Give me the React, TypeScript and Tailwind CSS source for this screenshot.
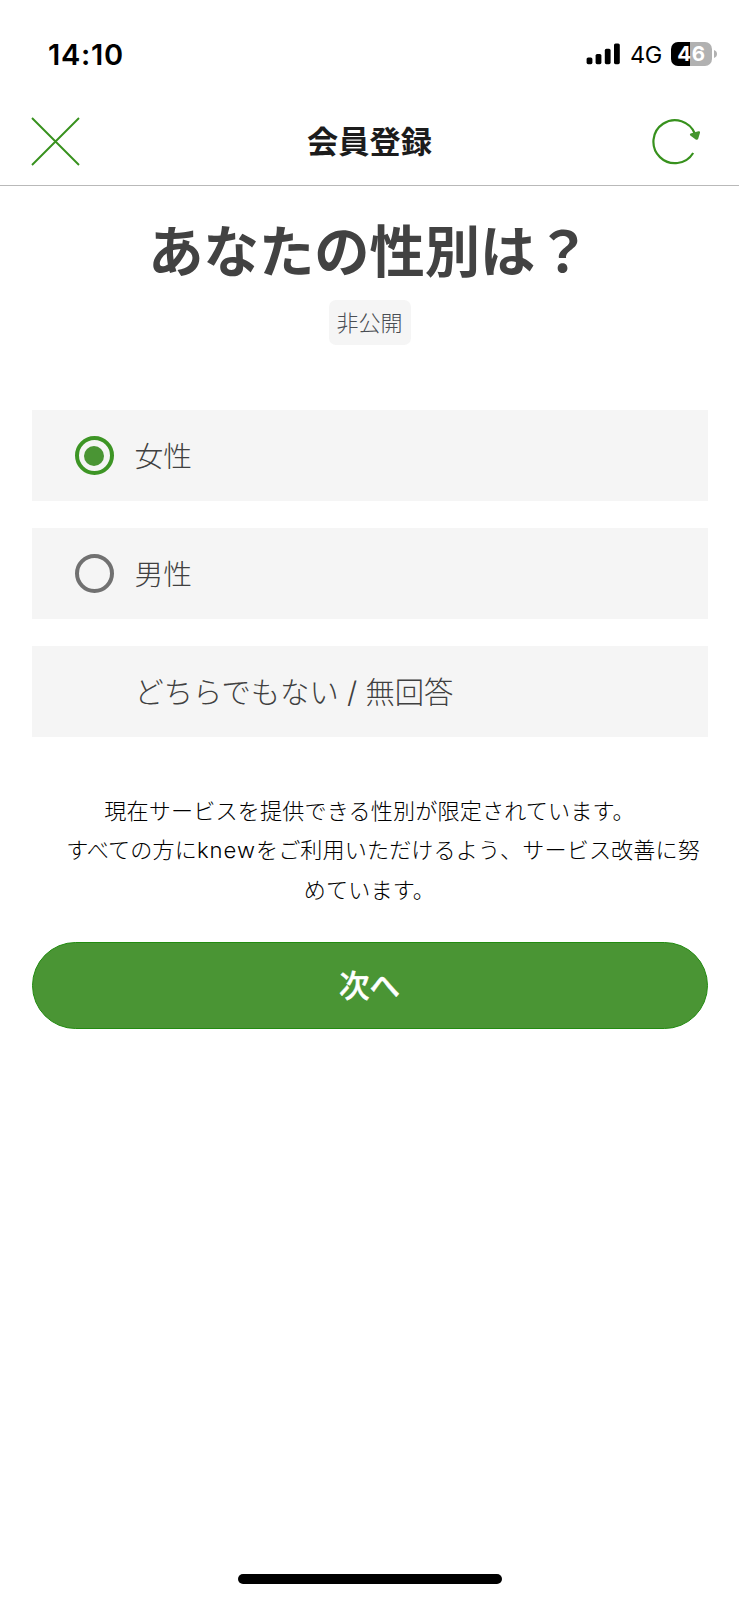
const jp = "font-['Inter','Noto_Sans_CJK_JP',sans-serif]";

function StatusBar() {
  return (
    <div className="flex h-[108px] items-center justify-between pl-[48px] pr-[22px]">
      <span className="font-['Inter',sans-serif] text-[29px] font-semibold leading-none tracking-[0.7px] text-black">14:10</span>
      <div className="flex items-center">
        <svg className="mr-[10px]" width="34" height="22" viewBox="0 0 34 22" fill="#000">
          <rect x="0.6" y="14.5" width="5.8" height="6.7" rx="1.6" />
          <rect x="9.6" y="11" width="5.8" height="10.2" rx="1.6" />
          <rect x="18.8" y="5.8" width="5.8" height="15.4" rx="1.6" />
          <rect x="28" y="0.5" width="5.8" height="20.7" rx="1.6" />
        </svg>
        <span className="w-[41px] pt-[2px] font-['Inter',sans-serif] text-[23.5px] leading-none tracking-[-0.5px] text-black">4G</span>
        <div className="flex h-6 w-[41px] items-center justify-center rounded-[7px] bg-linear-to-r from-black from-46% to-[#b1b1b1] to-46% font-['Inter',sans-serif] text-[20.5px] font-bold leading-6 tracking-[0.7px] text-white">
          46
        </div>
        <svg className="ml-[2px]" width="3" height="8" viewBox="0 0 3 8" fill="#b1b1b1">
          <path d="M0 0Q3 1.2 3 4T0 8Z" />
        </svg>
      </div>
    </div>
  );
}

function Header() {
  return (
    <header className="flex h-[78px] items-center justify-between border-b border-[#b9b9b9] px-[31px] pb-[10px]">
      <svg width="56" height="49" viewBox="0 0 56 49" fill="none" stroke="#37911d" strokeWidth="1.9">
        <path d="M1 1L48 48M48 1L1 48" />
      </svg>
      <h2 className="pt-[2px] text-[31.2px] font-bold leading-none text-[#1c1c1c]">会員登録</h2>
      <svg width="56" height="49" viewBox="0 0 56 49" fill="none">
        <path d="M41.2 36A21.5 21.5 0 1 1 43 17" stroke="#37911d" strokeWidth="2.2" />
        <path d="M38.3 18.4Q37.2 17.1 38.6 16.4L46.4 14.2Q48.6 13.8 48 15.7L46.2 21.7Q45.4 23.4 43.7 22.4Z" fill="#44952e" />
      </svg>
    </header>
  );
}

function Option({ label, state }: { label: string; state: "on" | "off" | "none" }) {
  return (
    <label className="flex h-[91px] items-center bg-[#f5f5f5] pl-[43px]">
      <span className="flex w-[60px] items-center">
        {state !== "none" && (
          <span
            className={`flex size-[39px] items-center justify-center rounded-full border-4 ${
              state === "on" ? "border-[#3d9525]" : "border-[#717171]"
            }`}
          >
            {state === "on" && <span className="size-5 rounded-full bg-[#4a9534]" />}
          </span>
        )}
      </span>
      <span className={`text-[#404040] font-light leading-none pt-[3px] ${state === "none" ? "text-[29.3px]" : "text-[28.8px]"}`}>{label}</span>
    </label>
  );
}

export default function App() {
  return (
    <div className={`flex h-[1600px] w-[739px] flex-col bg-white ${jp}`} lang="ja">
      <StatusBar />
      <Header />
      <main className="flex flex-col items-center px-[31.5px] pt-[38px]">
        <h1 className="text-[55.3px] font-bold leading-[56px] text-[#424242]">あなたの性別は？</h1>
        <span className="mt-[20px] flex h-[45px] w-[82px] items-center justify-center rounded-[7px] bg-[#f5f5f5] pt-px text-[22px] font-light text-[#4a4e54]">
          非公開
        </span>
        <div className="mt-[65px] flex w-full flex-col gap-[27px]">
          <Option label="女性" state="on" />
          <Option label="男性" state="off" />
          <Option label="どちらでもない / 無回答" state="none" />
        </div>
        <p className="mt-[55px] w-full whitespace-nowrap text-center text-[22.1px] font-light leading-[39.3px] text-black">
          <span className="block tracking-[0.15px]">現在サービスを提供できる性別が限定されています。</span>
          <span className="block pl-[27px] tracking-[0.1px]">
            すべての方に<span className="font-['Inter',sans-serif] tracking-[1px]">knew</span>をご利用いただけるよう、サービス改善に努
          </span>
          <span className="block tracking-[0.15px]">めています。</span>
        </p>
        <button className="mt-[32px] h-[87px] w-full rounded-full border border-[#228b10] bg-[#4a9534] pt-[2px] text-[30.5px] font-medium leading-none text-white [-webkit-text-stroke:0.5px_white]">
          次へ
        </button>
      </main>
      <div className="mx-auto mb-4 mt-auto h-[10px] w-[264px] rounded-full bg-black" />
    </div>
  );
}
